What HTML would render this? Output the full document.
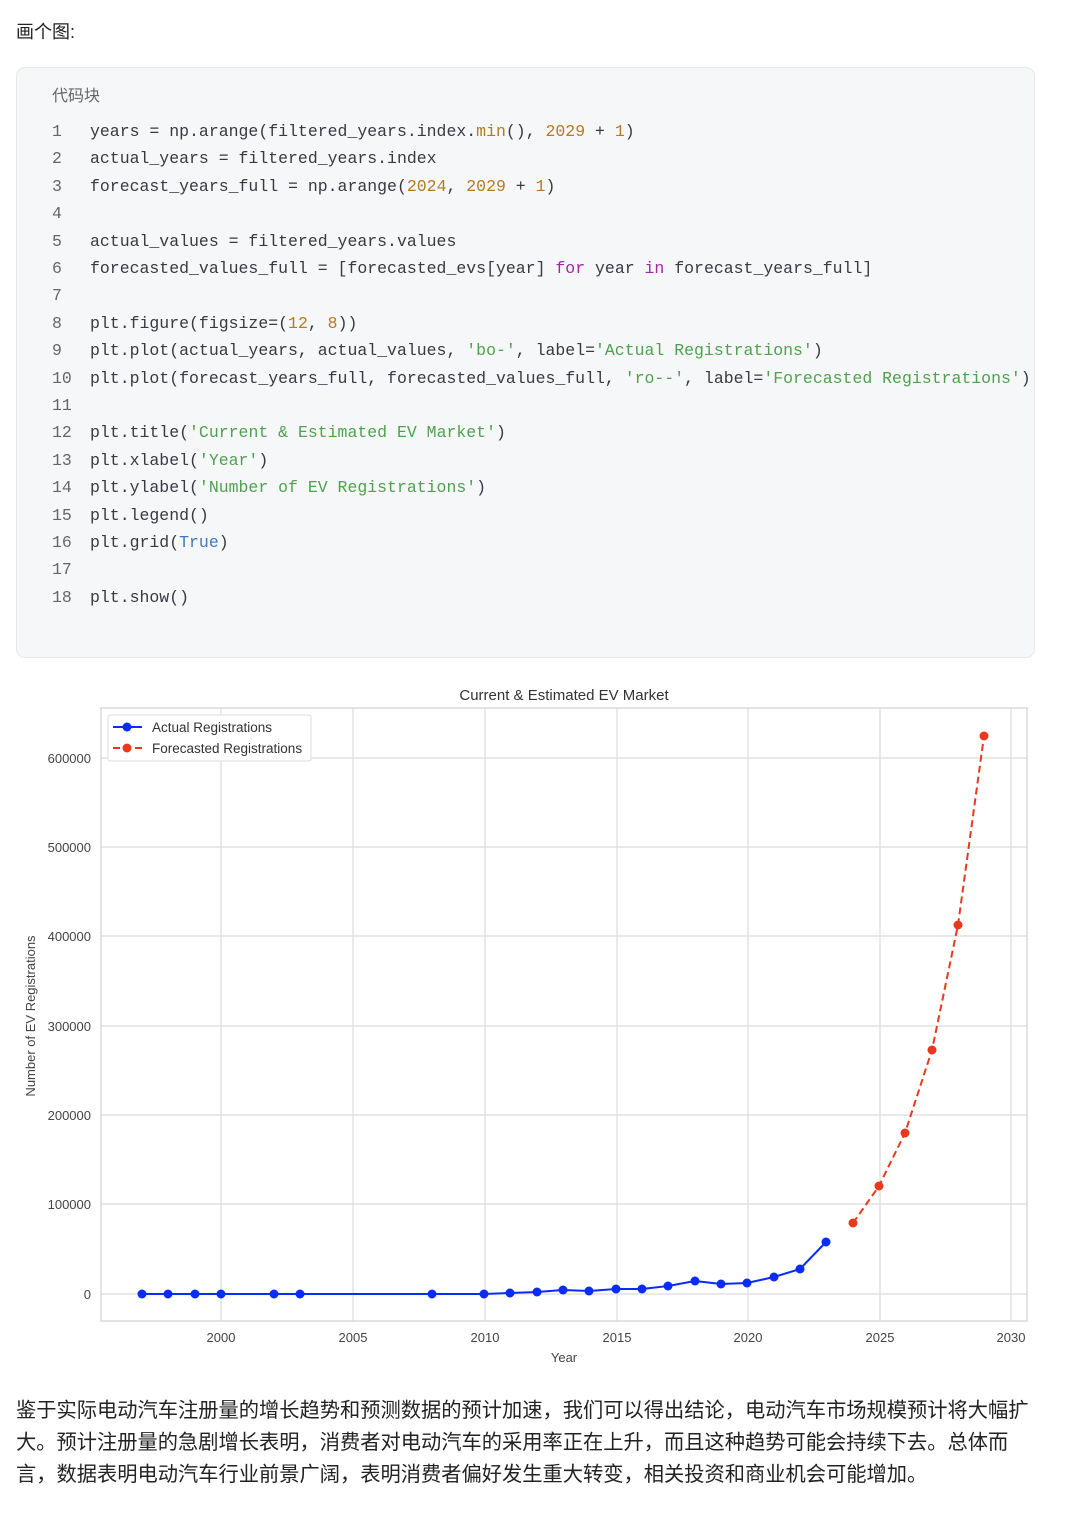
<!DOCTYPE html>
<html><head><meta charset="utf-8"><style>
body{margin:0;background:#fff;width:1080px;height:1519px;position:relative;overflow:hidden;font-family:"Liberation Sans","Noto Sans CJK SC",sans-serif;color:#222}
.h{position:absolute;left:16px;top:18px;font-size:18px}
.cb{position:absolute;left:16px;top:67px;width:1017px;height:589px;background:#f6f7f8;border:1px solid #e6e8eb;border-radius:9px}
.lab{position:absolute;left:35px;top:14px;font-size:16px;color:#666}
.code{position:absolute;left:0;top:50px;font-family:"Liberation Mono",monospace;font-size:16.5px;color:#383a42}
.ln{position:absolute;height:27.4px;line-height:27.4px;white-space:pre}
.n{left:35px;color:#666}
.c{left:73px}
.o{color:#b7791f}.s{color:#50a14f}.k{color:#a626a4}.b{color:#4078c0}
.p{position:absolute;left:16px;top:1395px;width:1060px;font-size:20.25px;line-height:32px;color:#222;white-space:nowrap}
</style></head><body>
<div class="h">画个图:</div>
<div class="cb"><div class="lab">代码块</div>
<div class="code">
<div class="ln n" style="top:0">1</div><div class="ln c" style="top:0">years = np.arange(filtered_years.index.<span class="o">min</span>(), <span class="o">2029</span> + <span class="o">1</span>)</div>
<div class="ln n" style="top:27.4px">2</div><div class="ln c" style="top:27.4px">actual_years = filtered_years.index</div>
<div class="ln n" style="top:54.8px">3</div><div class="ln c" style="top:54.8px">forecast_years_full = np.arange(<span class="o">2024</span>, <span class="o">2029</span> + <span class="o">1</span>)</div>
<div class="ln n" style="top:82.2px">4</div>
<div class="ln n" style="top:109.6px">5</div><div class="ln c" style="top:109.6px">actual_values = filtered_years.values</div>
<div class="ln n" style="top:137px">6</div><div class="ln c" style="top:137px">forecasted_values_full = [forecasted_evs[year] <span class="k">for</span> year <span class="k">in</span> forecast_years_full]</div>
<div class="ln n" style="top:164.4px">7</div>
<div class="ln n" style="top:191.8px">8</div><div class="ln c" style="top:191.8px">plt.figure(figsize=(<span class="o">12</span>, <span class="o">8</span>))</div>
<div class="ln n" style="top:219.2px">9</div><div class="ln c" style="top:219.2px">plt.plot(actual_years, actual_values, <span class="s">'bo-'</span>, label=<span class="s">'Actual Registrations'</span>)</div>
<div class="ln n" style="top:246.6px">10</div><div class="ln c" style="top:246.6px">plt.plot(forecast_years_full, forecasted_values_full, <span class="s">'ro--'</span>, label=<span class="s">'Forecasted Registrations'</span>)</div>
<div class="ln n" style="top:274px">11</div>
<div class="ln n" style="top:301.4px">12</div><div class="ln c" style="top:301.4px">plt.title(<span class="s">'Current &amp; Estimated EV Market'</span>)</div>
<div class="ln n" style="top:328.8px">13</div><div class="ln c" style="top:328.8px">plt.xlabel(<span class="s">'Year'</span>)</div>
<div class="ln n" style="top:356.2px">14</div><div class="ln c" style="top:356.2px">plt.ylabel(<span class="s">'Number of EV Registrations'</span>)</div>
<div class="ln n" style="top:383.6px">15</div><div class="ln c" style="top:383.6px">plt.legend()</div>
<div class="ln n" style="top:411px">16</div><div class="ln c" style="top:411px">plt.grid(<span class="b">True</span>)</div>
<div class="ln n" style="top:438.4px">17</div>
<div class="ln n" style="top:465.8px">18</div><div class="ln c" style="top:465.8px">plt.show()</div>
</div></div>
<svg style="position:absolute;left:0;top:0" width="1080" height="1519" font-family="Liberation Sans, sans-serif">
<g stroke="#dcdcdc" stroke-width="1.2">
<line x1="221" y1="708" x2="221" y2="1321"/><line x1="353" y1="708" x2="353" y2="1321"/><line x1="485" y1="708" x2="485" y2="1321"/><line x1="617" y1="708" x2="617" y2="1321"/><line x1="748" y1="708" x2="748" y2="1321"/><line x1="880" y1="708" x2="880" y2="1321"/><line x1="1011" y1="708" x2="1011" y2="1321"/>
<line x1="101" y1="758" x2="1027" y2="758"/><line x1="101" y1="847" x2="1027" y2="847"/><line x1="101" y1="936" x2="1027" y2="936"/><line x1="101" y1="1026" x2="1027" y2="1026"/><line x1="101" y1="1115" x2="1027" y2="1115"/><line x1="101" y1="1204" x2="1027" y2="1204"/><line x1="101" y1="1294" x2="1027" y2="1294"/>
</g>
<rect x="101" y="708" width="926" height="613" fill="none" stroke="#d0d0d0" stroke-width="1.2"/>
<text x="564" y="700" font-size="15" fill="#333" text-anchor="middle">Current &amp; Estimated EV Market</text>
<g font-size="13" fill="#444" text-anchor="end">
<text x="91" y="763">600000</text><text x="91" y="852">500000</text><text x="91" y="941">400000</text><text x="91" y="1031">300000</text><text x="91" y="1120">200000</text><text x="91" y="1209">100000</text><text x="91" y="1299">0</text></g>
<g font-size="13" fill="#444" text-anchor="middle">
<text x="221" y="1342">2000</text><text x="353" y="1342">2005</text><text x="485" y="1342">2010</text><text x="617" y="1342">2015</text><text x="748" y="1342">2020</text><text x="880" y="1342">2025</text><text x="1011" y="1342">2030</text>
<text x="564" y="1362">Year</text></g>
<text transform="translate(35 1016) rotate(-90)" font-size="13" fill="#444" text-anchor="middle">Number of EV Registrations</text>
<polyline fill="none" stroke="#0a2cf5" stroke-width="2" points="142,1294 168,1294 195,1294 221,1294 274,1294 300,1294 432,1294 484,1294 510,1293 537,1292 563,1290 589,1291 616,1289 642,1289 668,1286 695,1281 721,1284 747,1283 774,1277 800,1269 826,1242"/>
<g fill="#0a2cf5"><circle cx="142" cy="1294" r="4.5"/><circle cx="168" cy="1294" r="4.5"/><circle cx="195" cy="1294" r="4.5"/><circle cx="221" cy="1294" r="4.5"/><circle cx="274" cy="1294" r="4.5"/><circle cx="300" cy="1294" r="4.5"/><circle cx="432" cy="1294" r="4.5"/><circle cx="484" cy="1294" r="4.5"/><circle cx="510" cy="1293" r="4.5"/><circle cx="537" cy="1292" r="4.5"/><circle cx="563" cy="1290" r="4.5"/><circle cx="589" cy="1291" r="4.5"/><circle cx="616" cy="1289" r="4.5"/><circle cx="642" cy="1289" r="4.5"/><circle cx="668" cy="1286" r="4.5"/><circle cx="695" cy="1281" r="4.5"/><circle cx="721" cy="1284" r="4.5"/><circle cx="747" cy="1283" r="4.5"/><circle cx="774" cy="1277" r="4.5"/><circle cx="800" cy="1269" r="4.5"/><circle cx="826" cy="1242" r="4.5"/></g>
<polyline fill="none" stroke="#e8391e" stroke-width="2" stroke-dasharray="7,4" points="853,1223 879,1186 905,1133 932,1050 958,925 984,736"/>
<g fill="#e8391e"><circle cx="853" cy="1223" r="4.5"/><circle cx="879" cy="1186" r="4.5"/><circle cx="905" cy="1133" r="4.5"/><circle cx="932" cy="1050" r="4.5"/><circle cx="958" cy="925" r="4.5"/><circle cx="984" cy="736" r="4.5"/></g>
<rect x="108" y="715" width="203" height="46" fill="#fff" stroke="#ddd" rx="2"/>
<line x1="113" y1="727" x2="142" y2="727" stroke="#0a2cf5" stroke-width="2"/><circle cx="127" cy="727" r="4.5" fill="#0a2cf5"/>
<line x1="113" y1="748" x2="142" y2="748" stroke="#e8391e" stroke-width="2" stroke-dasharray="7,4"/><circle cx="127" cy="748" r="4.5" fill="#e8391e"/>
<text x="152" y="732" font-size="13.5" fill="#333">Actual Registrations</text>
<text x="152" y="753" font-size="13.5" fill="#333">Forecasted Registrations</text>
</svg>
<div class="p">鉴于实际电动汽车注册量的增长趋势和预测数据的预计加速，我们可以得出结论，电动汽车市场规模预计将大幅扩<br>大。预计注册量的急剧增长表明，消费者对电动汽车的采用率正在上升，而且这种趋势可能会持续下去。总体而<br>言，数据表明电动汽车行业前景广阔，表明消费者偏好发生重大转变，相关投资和商业机会可能增加。</div>
</body></html>
